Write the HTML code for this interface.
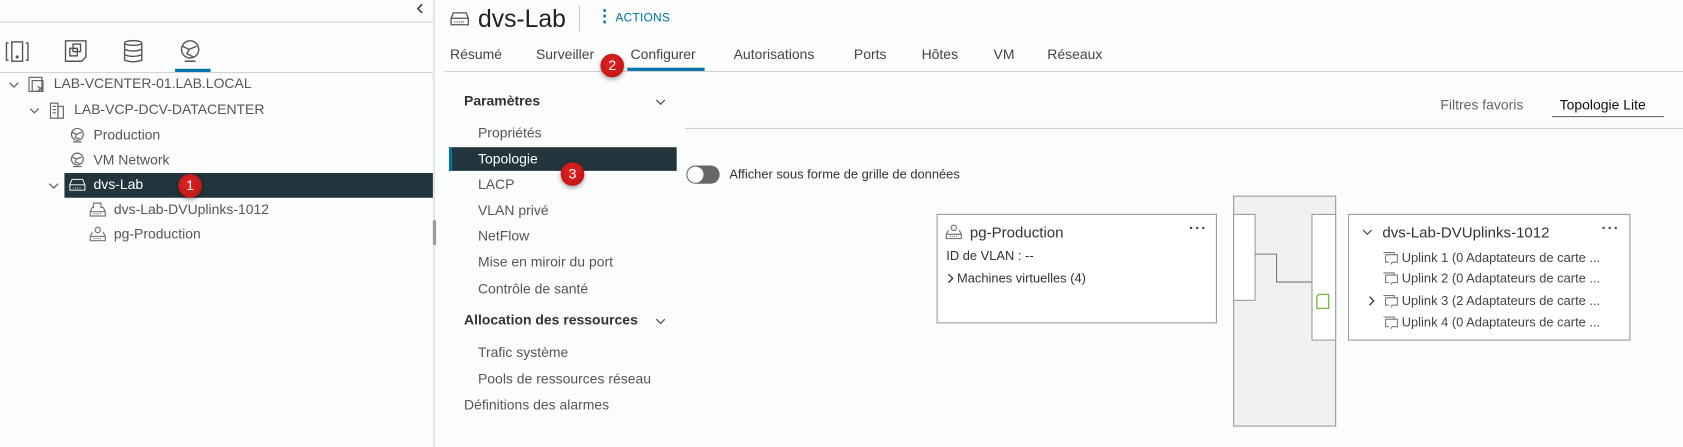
<!DOCTYPE html>
<html><head><meta charset="utf-8"><style>
html,body{margin:0;padding:0;width:1683px;height:447px;overflow:hidden;background:#fbfcfc;font-family:"Liberation Sans",sans-serif;}
#w{position:absolute;left:0;top:0;width:1567px;height:416px;transform:scale(1.0741,1.0746);transform-origin:0 0;}
.a{position:absolute;white-space:nowrap;}
.t{font-size:13px;color:#565656;line-height:16px;}
.hl{position:absolute;height:1px;background:#cfd4d8;}
.badge{position:absolute;width:22px;height:22px;border-radius:50%;background:radial-gradient(circle at 45% 40%,#e02424,#b80f0f);box-shadow:0 2px 4px rgba(0,0,0,.35);color:#fff;font-size:13px;text-align:center;line-height:22px;}
.box{position:absolute;background:#fff;border:1px solid #9a9a9a;box-sizing:border-box;}
.dots{position:absolute;font-size:14px;color:#444;letter-spacing:1px;font-weight:bold;}
svg{position:absolute;}
</style></head><body><div id="w">

<!-- left panel -->
<svg style="left:387px;top:3px" width="7" height="10" viewBox="0 0 7 10" fill="none" stroke="#333" stroke-width="1.4"><path d="M6 1L2 5L6 9"/></svg>
<div class="hl" style="left:0;top:20px;width:403px;"></div>
<div style="position:absolute;left:403px;top:0;width:2px;height:416px;background:#e4e6e8;"></div>
<div style="position:absolute;left:403px;top:205px;width:3px;height:23px;background:#9a9a9a;"></div>

<svg style="left:5px;top:38px" width="22" height="20" viewBox="0 0 22 20" fill="none" stroke="#555" stroke-width="1.3"><path d="M3 2H1V18H3M19 2H21V18H19"/><rect x="6" y="1" width="10" height="18"/><circle cx="11" cy="15" r=".8" fill="#555"/></svg>
<svg style="left:60px;top:37px" width="22" height="22" viewBox="0 0 22 22" fill="none" stroke="#555" stroke-width="1.3"><path d="M1 1H20V16L16 20H1Z"/><rect x="5" y="8" width="7" height="7"/><rect x="8" y="4" width="7" height="7"/></svg>
<svg style="left:115px;top:37px" width="18" height="22" viewBox="0 0 18 22" fill="none" stroke="#555" stroke-width="1.3"><ellipse cx="9" cy="3" rx="8" ry="2.2"/><path d="M1 3V19Q9 22 17 19V3M1 9Q9 12 17 9M1 14Q9 17 17 14"/></svg>
<svg style="left:166px;top:37px" width="22" height="22" viewBox="0 0 22 22" fill="none" stroke="#555" stroke-width="1.3"><circle cx="11" cy="9" r="8"/><path d="M4 6L10 9L8 13L14 16M10 9L17 6"/><path d="M6 20H16"/></svg>
<div style="position:absolute;left:163px;top:64px;width:33px;height:3px;background:#0072a3;"></div>
<div class="hl" style="left:0;top:67px;width:403px;"></div>

<svg style="left:8px;top:76px" width="10" height="6" viewBox="0 0 10 6" fill="none" stroke="#666" stroke-width="1.2"><path d="M1 1L5 5L9 1"/></svg>
<svg style="left:26px;top:71px" width="16" height="16" viewBox="0 0 16 16" fill="none" stroke="#666" stroke-width="1.1"><rect x="1" y="1" width="12" height="13"/><rect x="4" y="4" width="10" height="10"/><path d="M9 9L14 14M14 9L9 14"/></svg>
<div class="a t" style="left:50px;top:70px">LAB-VCENTER-01.LAB.LOCAL</div>

<svg style="left:27px;top:100px" width="10" height="6" viewBox="0 0 10 6" fill="none" stroke="#666" stroke-width="1.2"><path d="M1 1L5 5L9 1"/></svg>
<svg style="left:46px;top:95px" width="14" height="16" viewBox="0 0 14 16" fill="none" stroke="#666" stroke-width="1.1"><rect x="1" y="1" width="7" height="14"/><rect x="8" y="4" width="5" height="11"/><path d="M3 4H6M3 7H6M3 10H6"/></svg>
<div class="a t" style="left:69px;top:94px">LAB-VCP-DCV-DATACENTER</div>

<svg style="left:64px;top:118px" width="16" height="16" viewBox="0 0 16 16" fill="none" stroke="#666" stroke-width="1.1"><circle cx="8" cy="7" r="5.5"/><path d="M3 5L7 7L6 10L10 11M7 7L12 5M4 14H12"/></svg>
<div class="a t" style="left:87px;top:118px">Production</div>
<svg style="left:64px;top:141px" width="16" height="16" viewBox="0 0 16 16" fill="none" stroke="#666" stroke-width="1.1"><circle cx="8" cy="7" r="5.5"/><path d="M3 5L7 7L6 10L10 11M7 7L12 5M4 14H12"/></svg>
<div class="a t" style="left:87px;top:141px">VM Network</div>

<div style="position:absolute;left:60px;top:161px;width:343px;height:23px;background:#22343c;"></div>
<svg style="left:45px;top:170px" width="10" height="6" viewBox="0 0 10 6" fill="none" stroke="#666" stroke-width="1.2"><path d="M1 1L5 5L9 1"/></svg>
<svg style="left:64px;top:165px" width="16" height="14" viewBox="0 0 16 14" fill="none" stroke="#ddd" stroke-width="1.1"><path d="M3 2H13L15 7V12H1V7Z M1 7H15"/><path d="M4 10H12" stroke-dasharray="1 1"/></svg>
<div class="a t" style="left:87px;top:164px;color:#fff">dvs-Lab</div>
<div class="badge" style="left:166px;top:162px">1</div>

<svg style="left:83px;top:187px" width="16" height="16" viewBox="0 0 16 16" fill="none" stroke="#777" stroke-width="1.1"><path d="M4 2H11V6H13L15 10V14H1V10L3 6H4Z M1 10H15"/><path d="M4 12H12" stroke-dasharray="1 1"/></svg>
<div class="a t" style="left:106px;top:187px">dvs-Lab-DVUplinks-1012</div>
<svg style="left:83px;top:210px" width="16" height="16" viewBox="0 0 16 16" fill="none" stroke="#777" stroke-width="1.1"><circle cx="8" cy="4" r="2.5"/><path d="M3 6L1 10V14H15V10L13 6M1 10H15"/><path d="M4 12H12" stroke-dasharray="1 1"/></svg>
<div class="a t" style="left:106px;top:210px">pg-Production</div>

<!-- header -->
<svg style="left:419px;top:10px" width="18" height="15" viewBox="0 0 18 15" fill="none" stroke="#555" stroke-width="1.2"><path d="M3 2H15L17 7V13H1V7Z M1 7H17"/><path d="M4 10.5H14" stroke-dasharray="1 1"/></svg>
<div class="a" style="left:445px;top:3px;font-size:23px;color:#222;line-height:28px;">dvs-Lab</div>
<div style="position:absolute;left:539px;top:5px;width:1px;height:24px;background:#ccc;"></div>
<div class="a" style="left:555px;top:5px;font-size:16px;color:#0072a3;font-weight:bold;line-height:22px;">&#8942;</div>
<div class="a" style="left:573px;top:11px;font-size:11px;color:#0072a3;line-height:13px;letter-spacing:.3px;">ACTIONS</div>

<div class="a" style="left:419px;top:43px;font-size:13px;color:#444;line-height:16px;">Résumé</div>
<div class="a" style="left:499px;top:43px;font-size:13px;color:#444;line-height:16px;">Surveiller</div>
<div class="a" style="left:587px;top:43px;font-size:13px;color:#444;line-height:16px;">Configurer</div>
<div class="a" style="left:683px;top:43px;font-size:13px;color:#444;line-height:16px;">Autorisations</div>
<div class="a" style="left:795px;top:43px;font-size:13px;color:#444;line-height:16px;">Ports</div>
<div class="a" style="left:858px;top:43px;font-size:13px;color:#444;line-height:16px;">Hôtes</div>
<div class="a" style="left:925px;top:43px;font-size:13px;color:#444;line-height:16px;">VM</div>
<div class="a" style="left:975px;top:43px;font-size:13px;color:#444;line-height:16px;">Réseaux</div>
<div class="hl" style="left:414px;top:66px;width:1153px;"></div>
<div style="position:absolute;left:584px;top:63px;width:72px;height:3px;background:#0072a3;"></div>
<div class="badge" style="left:559px;top:50px">2</div>

<!-- sidebar -->
<div class="a" style="left:432px;top:86px;font-size:13px;color:#333;font-weight:bold;line-height:16px;">Paramètres</div>
<svg style="left:610px;top:92px" width="10" height="6" viewBox="0 0 10 6" fill="none" stroke="#555" stroke-width="1.2"><path d="M1 1L5 5L9 1"/></svg>
<div class="a t" style="left:445px;top:116px">Propriétés</div>
<div style="position:absolute;left:418px;top:137px;width:212px;height:22px;background:#22343c;"></div>
<div style="position:absolute;left:418px;top:137px;width:3px;height:22px;background:#0072a3;"></div>
<div class="a t" style="left:445px;top:140px;color:#fff">Topologie</div>
<div class="badge" style="left:522px;top:151px">3</div>
<div class="a t" style="left:445px;top:164px">LACP</div>
<div class="a t" style="left:445px;top:188px">VLAN privé</div>
<div class="a t" style="left:445px;top:212px">NetFlow</div>
<div class="a t" style="left:445px;top:236px">Mise en miroir du port</div>
<div class="a t" style="left:445px;top:261px">Contrôle de santé</div>
<div class="a" style="left:432px;top:290px;font-size:13px;color:#333;font-weight:bold;line-height:16px;">Allocation des ressources</div>
<svg style="left:610px;top:296px" width="10" height="6" viewBox="0 0 10 6" fill="none" stroke="#555" stroke-width="1.2"><path d="M1 1L5 5L9 1"/></svg>
<div class="a t" style="left:445px;top:320px">Trafic système</div>
<div class="a t" style="left:445px;top:345px">Pools de ressources réseau</div>
<div class="a t" style="left:432px;top:369px">Définitions des alarmes</div>

<!-- content -->
<div class="a t" style="left:1341px;top:90px;color:#666">Filtres favoris</div>
<div class="a t" style="left:1452px;top:90px;color:#111">Topologie Lite</div>
<div style="position:absolute;left:1445px;top:108px;width:104px;height:1px;background:#666;"></div>
<div class="hl" style="left:638px;top:119px;width:929px;background:#c8cbce;"></div>

<div style="position:absolute;left:639px;top:154px;width:31px;height:17px;border-radius:9px;background:#666;"></div>
<div style="position:absolute;left:640px;top:155px;width:15px;height:15px;border-radius:50%;background:#fff;"></div>
<div class="a" style="left:679px;top:155px;font-size:12px;color:#333;line-height:15px;">Afficher sous forme de grille de données</div>

<div class="box" style="left:872px;top:199px;width:261px;height:102px;"></div>
<svg style="left:880px;top:208px" width="16" height="16" viewBox="0 0 16 16" fill="none" stroke="#777" stroke-width="1.1"><circle cx="8" cy="4" r="2.5"/><path d="M3 6L1 10V14H15V10L13 6M1 10H15"/><path d="M4 12H12" stroke-dasharray="1 1"/></svg>
<div class="a" style="left:903px;top:208px;font-size:14px;color:#333;line-height:17px;">pg-Production</div>
<div class="dots" style="left:1107px;top:204px">&middot;&middot;&middot;</div>
<div class="a" style="left:881px;top:231px;font-size:12px;color:#333;line-height:15px;">ID de VLAN : --</div>
<svg style="left:882px;top:254px" width="6" height="10" viewBox="0 0 6 10" fill="none" stroke="#333" stroke-width="1.2"><path d="M1 1L5 5L1 9"/></svg>
<div class="a" style="left:891px;top:252px;font-size:12px;color:#333;line-height:15px;">Machines virtuelles (4)</div>

<div class="box" style="left:1148px;top:182px;width:96px;height:215px;background:#f1f1f1;"></div>
<div class="box" style="left:1148px;top:199px;width:21px;height:81px;"></div>
<div class="box" style="left:1221px;top:199px;width:23px;height:118px;"></div>
<svg style="left:1168px;top:235px" width="54" height="30"><path d="M0 1.5H20.5V27.5H53" fill="none" stroke="#777" stroke-width="1"/></svg>
<svg style="left:1225px;top:273px" width="14" height="16" viewBox="0 0 14 16" fill="none" stroke="#7bb84a" stroke-width="1.3"><path d="M3 1H12V14H1V3Z"/></svg>

<div class="box" style="left:1255px;top:199px;width:263px;height:118px;"></div>
<svg style="left:1268px;top:213px" width="10" height="6" viewBox="0 0 10 6" fill="none" stroke="#555" stroke-width="1.2"><path d="M1 1L5 5L9 1"/></svg>
<div class="a" style="left:1287px;top:208px;font-size:14px;color:#333;line-height:17px;">dvs-Lab-DVUplinks-1012</div>
<div class="dots" style="left:1491px;top:204px">&middot;&middot;&middot;</div>
<svg style="left:1287px;top:234px" width="15" height="13" viewBox="0 0 15 13" fill="none" stroke="#777" stroke-width="1"><path d="M1 1H11V3M3 3H14V10H9L8 12M3 3V10H6"/></svg>
<div class="a" style="left:1305px;top:233px;font-size:12px;color:#444;line-height:15px;">Uplink 1 (0 Adaptateurs de carte ...</div>
<svg style="left:1287px;top:253px" width="15" height="13" viewBox="0 0 15 13" fill="none" stroke="#777" stroke-width="1"><path d="M1 1H11V3M3 3H14V10H9L8 12M3 3V10H6"/></svg>
<div class="a" style="left:1305px;top:252px;font-size:12px;color:#444;line-height:15px;">Uplink 2 (0 Adaptateurs de carte ...</div>
<svg style="left:1274px;top:275px" width="6" height="10" viewBox="0 0 6 10" fill="none" stroke="#333" stroke-width="1.2"><path d="M1 1L5 5L1 9"/></svg>
<svg style="left:1287px;top:274px" width="15" height="13" viewBox="0 0 15 13" fill="none" stroke="#777" stroke-width="1"><path d="M1 1H11V3M3 3H14V10H9L8 12M3 3V10H6"/></svg>
<div class="a" style="left:1305px;top:273px;font-size:12px;color:#444;line-height:15px;">Uplink 3 (2 Adaptateurs de carte ...</div>
<svg style="left:1287px;top:294px" width="15" height="13" viewBox="0 0 15 13" fill="none" stroke="#777" stroke-width="1"><path d="M1 1H11V3M3 3H14V10H9L8 12M3 3V10H6"/></svg>
<div class="a" style="left:1305px;top:293px;font-size:12px;color:#444;line-height:15px;">Uplink 4 (0 Adaptateurs de carte ...</div>

</div></body></html>
